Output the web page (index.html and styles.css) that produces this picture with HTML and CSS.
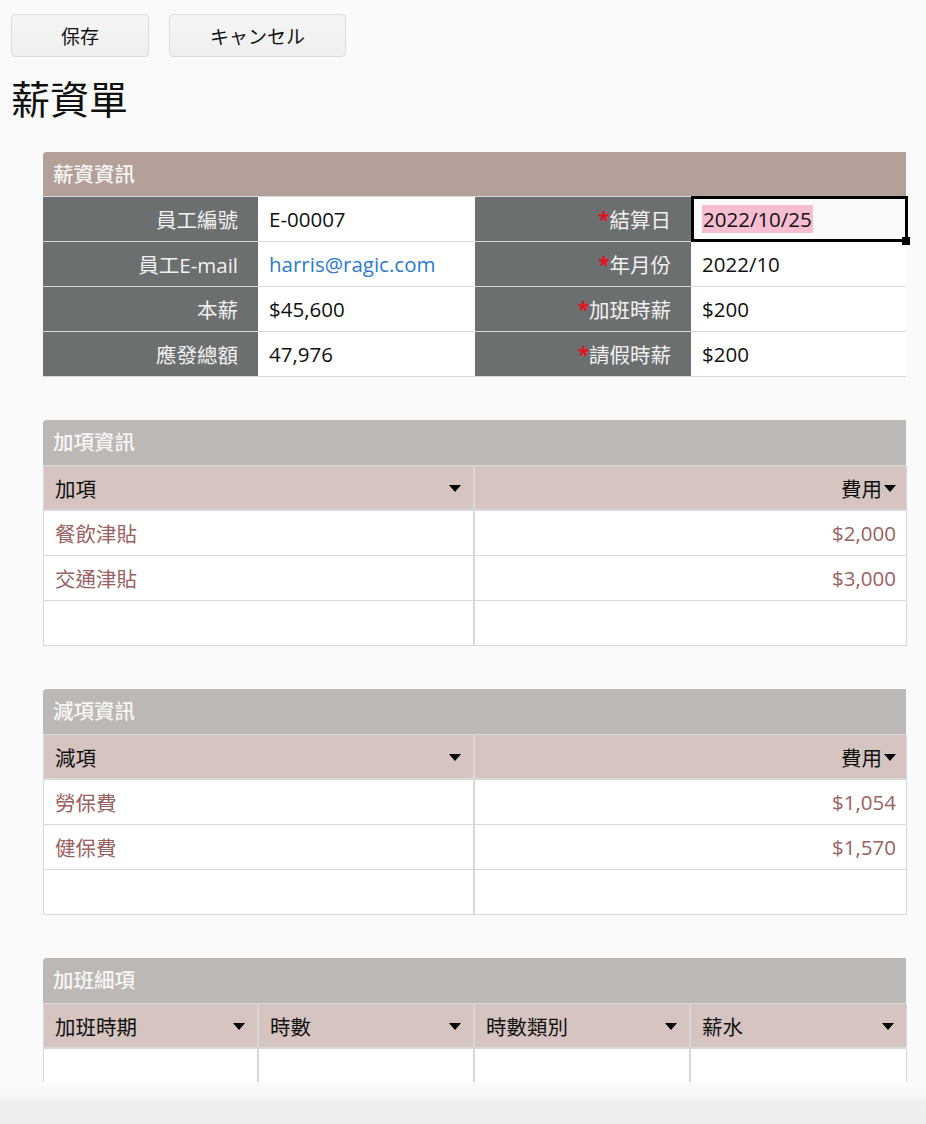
FILE: index.html
```html
<!DOCTYPE html>
<html lang="zh-Hant">
<head>
<meta charset="utf-8">
<title>薪資單</title>
<link rel="stylesheet" href="styles.css">
</head>
<body>
<div class="toolbar">
  <button class="btn save">保存</button>
  <button class="btn cancel">キャンセル</button>
</div>
<h1 class="title">薪資單</h1>

<section class="sheet">
  <div class="sec-head first">薪資資訊</div>
  <div class="form-grid">
    <div class="lbl">員工編號</div><div class="val">E-00007</div>
    <div class="lbl"><span class="req">*</span>結算日</div><div class="val selected"><span class="hl">2022/10/25</span></div>
    <div class="lbl">員工E-mail</div><div class="val link">harris@ragic.com</div>
    <div class="lbl"><span class="req">*</span>年月份</div><div class="val">2022/10</div>
    <div class="lbl">本薪</div><div class="val">$45,600</div>
    <div class="lbl"><span class="req">*</span>加班時薪</div><div class="val">$200</div>
    <div class="lbl">應發總額</div><div class="val">47,976</div>
    <div class="lbl"><span class="req">*</span>請假時薪</div><div class="val">$200</div>
  </div>
</section>

<section class="sheet">
  <div class="sec-head">加項資訊</div>
  <div class="sub two">
    <div class="th"><span>加項</span><span class="caret"></span></div>
    <div class="th right"><span>費用</span><span class="caret tight"></span></div>
    <div class="td">餐飲津貼</div><div class="td num">$2,000</div>
    <div class="td">交通津貼</div><div class="td num">$3,000</div>
    <div class="td"></div><div class="td"></div>
  </div>
</section>

<section class="sheet">
  <div class="sec-head">減項資訊</div>
  <div class="sub two">
    <div class="th"><span>減項</span><span class="caret"></span></div>
    <div class="th right"><span>費用</span><span class="caret tight"></span></div>
    <div class="td">勞保費</div><div class="td num">$1,054</div>
    <div class="td">健保費</div><div class="td num">$1,570</div>
    <div class="td"></div><div class="td"></div>
  </div>
</section>

<section class="sheet">
  <div class="sec-head">加班細項</div>
  <div class="sub four">
    <div class="th"><span>加班時期</span><span class="caret"></span></div>
    <div class="th"><span>時數</span><span class="caret"></span></div>
    <div class="th"><span>時數類別</span><span class="caret"></span></div>
    <div class="th"><span>薪水</span><span class="caret"></span></div>
    <div class="td"></div><div class="td"></div><div class="td"></div><div class="td"></div>
  </div>
</section>

<div class="bottom-bar"></div>
</body>
</html>
```

FILE: styles.css
```css
* { box-sizing: border-box; }

html, body {
  margin: 0;
  padding: 0;
  background: #fafafa;
  font-family: "Open Sans", "Noto Sans CJK TC", sans-serif;
  color: #111;
}

body {
  padding-bottom: 120px;
}

.toolbar {
  display: flex;
  gap: 20px;
  padding: 14px 0 0 11px;
}

.btn {
  height: 43px;
  border: 1px solid #dcdcdc;
  border-radius: 4px;
  background: linear-gradient(#f5f5f5, #efefef);
  font-family: "Noto Sans CJK JP", "Noto Sans CJK TC", sans-serif;
  font-size: 19px;
  color: #111;
  padding: 0;
}

.save { width: 138px; }
.cancel { width: 177px; }

.title {
  margin: 15px 0 0 11px;
  height: 50px;
  line-height: 50px;
  font-family: "Noto Sans CJK TC", sans-serif;
  font-size: 39px;
  font-weight: 400;
  color: #111;
}

.sheet {
  margin: 30px 0 0 43px;
  width: 863px;
}

.sheet + .sheet {
  margin-top: 43px;
}

.sec-head {
  height: 45px;
  line-height: 44px;
  padding-left: 10px;
  background: #bcb8b6;
  border-bottom: 1px solid #dadada;
  color: #f8f6f5;
  font-size: 20.5px;
  font-weight: 500;
  border-radius: 4px 0 0 0;
}

.sheet + .sheet .sec-head {
  height: 46px;
  line-height: 45px;
}

.sec-head.first {
  background: #b3a098;
}

.form-grid {
  display: grid;
  grid-template-columns: 215px 217px 216px 215px;
  grid-auto-rows: 45px;
}

.lbl, .val {
  display: flex;
  align-items: center;
  border-bottom: 1px solid #d8d8d8;
  font-size: 20.5px;
}

.lbl {
  justify-content: flex-end;
  padding-right: 20px;
  background: #6c6f6f;
  color: #f2f2f2;
}

.req {
  color: #e8101e;
  font-weight: 700;
}

.val {
  background: #fff;
  padding-left: 11px;
  color: #111;
}

.val.link {
  color: #2b7bd2;
}

.val.selected {
  position: relative;
  background: #fafafa;
}

.val.selected::after {
  content: "";
  position: absolute;
  left: 0;
  top: -1px;
  right: -2px;
  bottom: -1px;
  border: 3px solid #000;
}

.val.selected::before {
  content: "";
  position: absolute;
  right: -4px;
  bottom: -4px;
  width: 8px;
  height: 8px;
  background: #000;
  z-index: 2;
}

.hl {
  background: #f7bdd1;
  padding: 0 1px;
  line-height: 28px;
}

.sub {
  display: grid;
  grid-auto-rows: 45px;
  border-left: 1px solid #d8d8d8;
}

.sub.two { grid-template-columns: 431px 432px; }
.sub.four { grid-template-columns: 215px 216px 216px 216px; }

.th, .td {
  display: flex;
  align-items: center;
  border-right: 2px solid #d8d8d8;
  border-bottom: 1px solid #d8d8d8;
  font-size: 20.5px;
}

.th {
  background: #d5c4c0;
  justify-content: space-between;
  padding: 0 12px 0 11px;
  color: #111;
  border-bottom-width: 2px;
}

.th.right {
  justify-content: flex-end;
  padding-right: 10px;
}

.caret {
  width: 0;
  height: 0;
  border-left: 6px solid transparent;
  border-right: 6px solid transparent;
  border-top: 7px solid #000;
  margin-top: 2px;
}

.caret.tight {
  margin-left: 2px;
}

.td {
  background: #fff;
  padding: 0 10px 0 11px;
  color: #9a6262;
}

.td.num {
  justify-content: flex-end;
}

.sub.two .td:nth-child(2n), .sub.two .th:nth-child(2n) {
  border-right-width: 1px;
}

.sub.four .td:nth-child(4n), .sub.four .th:nth-child(4n) {
  border-right-width: 1px;
}

.bottom-bar {
  position: fixed;
  left: 0;
  right: 0;
  bottom: 0;
  height: 42px;
  background: linear-gradient(#fbfbfb 0, #f6f6f6 40%, #efefef 45%, #eeeeee 100%);
  z-index: 5;
}
```
